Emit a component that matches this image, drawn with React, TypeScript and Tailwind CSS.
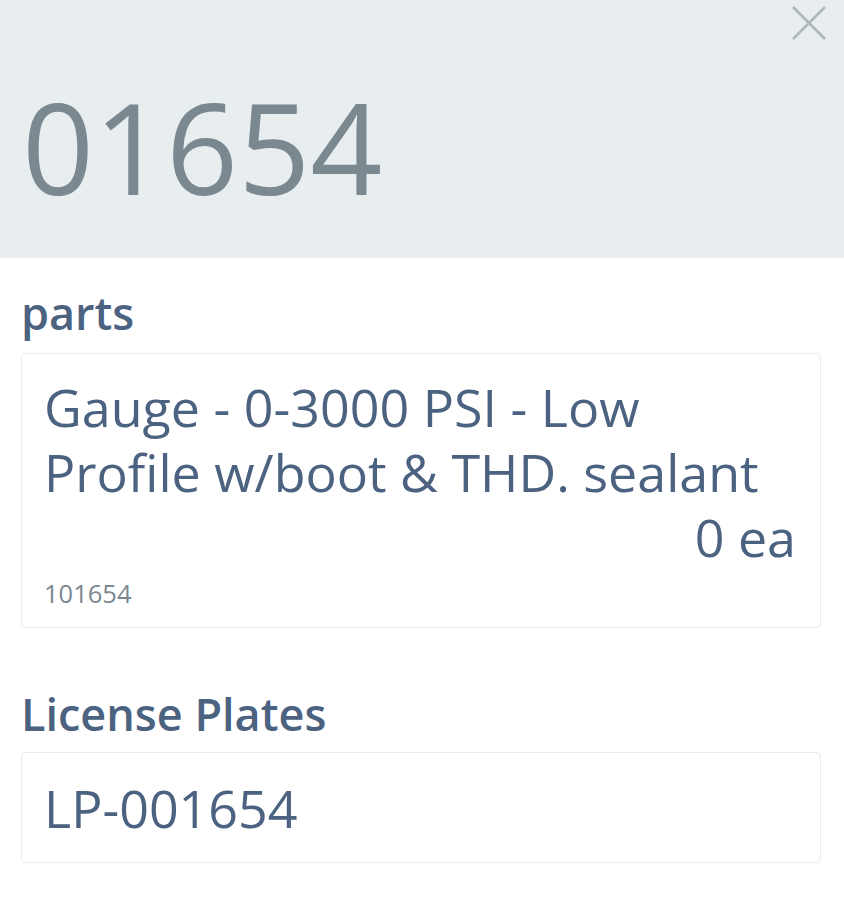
import React from "react";

const parts = [
  {
    name: "Gauge - 0-3000 PSI - Low Profile w/boot & THD. sealant",
    qty: "0 ea",
    sku: "101654",
  },
];

const plates = ["LP-001654"];

function CloseIcon() {
  return (
    <svg width="36" height="36" viewBox="0 0 36 36" fill="none" className="text-[#adb5b9]">
      <path d="M2 2L34 34M34 2L2 34" stroke="currentColor" strokeWidth="2.5" />
    </svg>
  );
}

export default function App() {
  return (
    <div className="w-[844px] h-[900px] bg-white font-['Open_Sans',sans-serif] overflow-hidden">
      <div className="relative h-[258px] bg-[#e8eef0] pl-[22px] pt-[66px]">
        <button className="absolute right-[17px] top-[5px]">
          <CloseIcon />
        </button>
        <div className="text-[126px] leading-[160px] text-[#7b8890]">01654</div>
      </div>

      <div className="pl-[21px] pr-[23px]">
        <h2 className="mt-[27px] text-[45px] leading-[55px] font-semibold text-[#4b6280]">parts</h2>
        <div className="mt-[13px] flex flex-col gap-3">
          {parts.map((p) => (
            <div
              key={p.sku}
              className="rounded-[4px] border border-[#e9ebec] pl-[22px] pr-[24px] pt-[20px] pb-[15px] text-[#4b6280]"
            >
              <div className="text-[52px] leading-[65px]">{p.name}</div>
              <div className="text-right text-[52px] leading-[65px]">{p.qty}</div>
              <div className="mt-[6px] text-[25.5px] leading-[37px] text-[#7b8890]">{p.sku}</div>
            </div>
          ))}
        </div>

        <h2 className="mt-[58px] text-[45px] leading-[55px] font-semibold text-[#4b6280]">
          License Plates
        </h2>
        <div className="mt-[11px] flex flex-col gap-3">
          {plates.map((lp) => (
            <div
              key={lp}
              className="rounded-[4px] border border-[#e9ebec] pl-[22px] pr-[24px] pt-[22px] pb-[22px] text-[52px] leading-[65px] text-[#4b6280]"
            >
              {lp}
            </div>
          ))}
        </div>
      </div>
    </div>
  );
}
